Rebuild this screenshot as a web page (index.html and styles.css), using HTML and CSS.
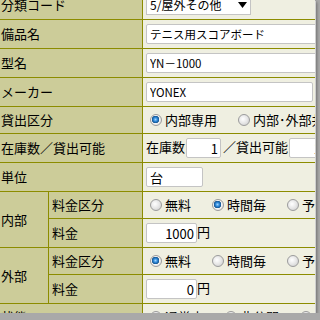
FILE: index.html
```html
<!DOCTYPE html>
<html lang="ja">
<head>
    <meta charset="UTF-8">
    <title>備品登録</title>
    <link rel="stylesheet" href="styles.css">
</head>
<body>
    <div class="frame">
        <table class="form">
            <colgroup>
                <col class="col-group">
                <col class="col-sub">
                <col class="col-value">
            </colgroup>
            <!-- 基本情報 -->
            <tr class="tall">
                <th colspan="2">分類コード</th>
                <td><div class="select">5/屋外その他<span class="arrow"><svg width="9" height="6" viewBox="0 0 9 6"><path d="M0 0h9L4.5 6z" fill="#000"/></svg></span></div></td>
            </tr>
            <tr class="tall">
                <th colspan="2">備品名</th>
                <td><input class="text long" type="text" value="テニス用スコアボード"></td>
            </tr>
            <tr class="tall">
                <th colspan="2">型名</th>
                <td><input class="text long" type="text" value="YN－1000"></td>
            </tr>
            <tr class="tall">
                <th colspan="2">メーカー</th>
                <td><input class="text maker" type="text" value="YONEX"></td>
            </tr>
            <tr class="short">
                <th colspan="2">貸出区分</th>
                <td>
                    <label class="opt"><input type="radio" name="kubun" checked>内部専用</label>
                    <label class="opt"><input type="radio" name="kubun">内部･外部共用</label>
                </td>
            </tr>
            <tr class="tall">
                <th colspan="2">在庫数／貸出可能</th>
                <td>在庫数<input class="text num stock" type="text" value="1">／貸出可能<input class="text num stock" type="text" value="1"></td>
            </tr>
            <tr class="tall">
                <th colspan="2">単位</th>
                <td><input class="text unit" type="text" value="台"></td>
            </tr>
            <!-- 料金 -->
            <tr class="short">
                <th rowspan="2" class="group">内部</th>
                <th>料金区分</th>
                <td>
                    <label class="opt"><input type="radio" name="in_fee">無料</label>
                    <label class="opt"><input type="radio" name="in_fee" checked>時間毎</label>
                    <label class="opt"><input type="radio" name="in_fee">予約毎</label>
                </td>
            </tr>
            <tr class="tall">
                <th>料金</th>
                <td><input class="text num fee" type="text" value="1000">円</td>
            </tr>
            <tr class="short">
                <th rowspan="2" class="group">外部</th>
                <th>料金区分</th>
                <td>
                    <label class="opt"><input type="radio" name="out_fee" checked>無料</label>
                    <label class="opt"><input type="radio" name="out_fee">時間毎</label>
                    <label class="opt"><input type="radio" name="out_fee">予約毎</label>
                </td>
            </tr>
            <tr class="tall">
                <th>料金</th>
                <td><input class="text num fee" type="text" value="0">円</td>
            </tr>
            <tr class="short">
                <th colspan="2">状態</th>
                <td>
                    <label class="opt"><input type="radio" name="state">通常中</label>
                    <label class="opt"><input type="radio" name="state">非公開</label>
                    <label class="opt"><input type="radio" name="state">停止中</label>
                </td>
            </tr>
        </table>
    </div>
</body>
</html>
```

FILE: styles.css
```css
body {
    margin: 0;
    background: #a9a9a9;
    font-family: "Noto Sans CJK JP", sans-serif;
    font-size: 13px;
    color: #000;
}
.frame {
    width: 315px;
    height: 313px;
    overflow: hidden;
    background: #efefe1;
    box-shadow: 1px 1px 0 #cfcfcf, 2px 2px 3px rgba(0, 0, 0, 0.35);
}
.form {
    border-collapse: collapse;
    table-layout: fixed;
    width: 340px;
    margin: -10px 0 0 -3px;
}
.col-group { width: 51px; }
.col-sub { width: 94px; }
.col-value { width: 195px; }

.form th,
.form td {
    border: 1px solid #8c8c00;
    padding: 0 3px;
    white-space: nowrap;
    overflow: hidden;
    vertical-align: middle;
    line-height: 16px;
}
.form th {
    background: #cccc99;
    font-weight: normal;
    text-align: left;
}
.form td {
    background: #efefe1;
}
.tall th, .tall td { height: 28px; }
.short th, .short td { height: 26px; }

/* 入力欄 */
.text {
    box-sizing: border-box;
    height: 20px;
    margin: 0;
    padding: 0 3px;
    border: 1px solid #c4c4c4;
    border-radius: 2px;
    background: #fff;
    font-family: inherit;
    font-size: 11.5px;
    vertical-align: middle;
}
.long { width: 210px; }
.maker { width: 167px; }
.unit { width: 57px; font-size: 13px; }
.num { text-align: right; font-size: 13px; padding-right: 2px; }
.stock { width: 35px; margin: 0 2px 0 1px; }
.fee { width: 51px; }

.select {
    box-sizing: border-box;
    display: inline-flex;
    align-items: center;
    width: 105px;
    height: 20px;
    padding: 0 3px;
    border: 1px solid #c4c4c4;
    background: #fff;
    font-size: 12px;
    vertical-align: middle;
}
.arrow {
    margin-left: auto;
    display: flex;
}

/* ラジオボタン */
.opt {
    display: inline-flex;
    align-items: center;
    margin-right: 14px;
}
.opt input {
    appearance: none;
    box-sizing: border-box;
    width: 12px;
    height: 12px;
    margin: 0 3px 0 4px;
    border: 1px solid #9c9c9c;
    border-radius: 50%;
    background: radial-gradient(circle at 40% 40%, #fff 0, #e6e6e6 50%, #c8c8c8 100%);
}
.opt input:checked {
    background: radial-gradient(circle at 45% 45%, #9fd6ff 0, #2d86d6 2px, #15558f 3.5px, #f4f4f4 4px, #d2d2d2 100%);
}
```
